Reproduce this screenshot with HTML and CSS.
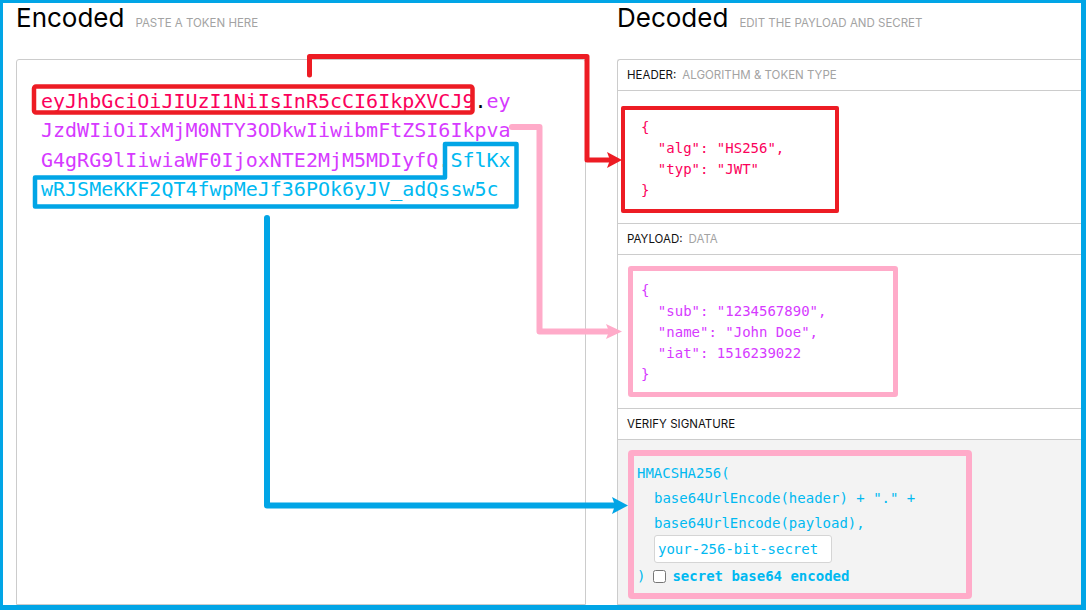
FILE: index.html
```html
<!DOCTYPE html>
<html lang="en">
<head>
<meta charset="utf-8">
<title>JWT Debugger</title>
<link rel="stylesheet" href="styles.css">
</head>
<body>
<div class="frame">
  <section class="col">
    <header class="title-row">
      <h2 class="title">Encoded</h2>
      <span class="subtitle">PASTE A TOKEN HERE</span>
    </header>
    <div class="box encoded">
      <div class="token"><span class="tk-header">eyJhbGciOiJIUzI1NiIsInR5cCI6IkpXVCJ9</span><span class="tk-dot">.</span><span class="tk-payload">eyJzdWIiOiIxMjM0NTY3ODkwIiwibmFtZSI6IkpvaG4gRG9lIiwiaWF0IjoxNTE2MjM5MDIyfQ</span><span class="tk-dot">.</span><span class="tk-sig">SflKxwRJSMeKKF2QT4fwpMeJf36POk6yJV_adQssw5c</span></div>
    </div>
  </section>

  <section class="col">
    <header class="title-row">
      <h2 class="title">Decoded</h2>
      <span class="subtitle">EDIT THE PAYLOAD AND SECRET</span>
    </header>
    <div class="box panel">
      <div class="panel-head"><span class="ph-name">HEADER:</span><span class="ph-desc">ALGORITHM &amp; TOKEN TYPE</span></div>
      <div class="panel-body pb-header">
<pre class="json json-header">{
  "alg": "HS256",
  "typ": "JWT"
}</pre>
      </div>
      <div class="panel-head"><span class="ph-name">PAYLOAD:</span><span class="ph-desc">DATA</span></div>
      <div class="panel-body pb-payload">
<pre class="json json-payload">{
  "sub": "1234567890",
  "name": "John Doe",
  "iat": 1516239022
}</pre>
      </div>
      <div class="panel-head"><span class="ph-name">VERIFY SIGNATURE</span></div>
      <div class="panel-body pb-verify">
        <div class="verify">
          <div class="v-line">HMACSHA256(</div>
          <div class="v-indent">
            <div class="v-line">base64UrlEncode(header) + "." +</div>
            <div class="v-line">base64UrlEncode(payload),</div>
            <input class="secret" type="text" value="your-256-bit-secret">
          </div>
          <div class="v-line v-last"><span>)</span><input class="cb" type="checkbox"><span class="cb-label">secret base64 encoded</span></div>
        </div>
      </div>
    </div>
  </section>
</div>

<svg class="annotations" width="1086" height="610" viewBox="0 0 1086 610" aria-hidden="true">
  <!-- highlight boxes on the encoded token -->
  <rect x="34" y="86.5" width="438.5" height="26" rx="2" fill="none" stroke="#ed1c24" stroke-width="4.5"/>
  <path d="M445 144 H516.5 V206.5 H35 V177.5 H445 Z" fill="none" stroke="#01a5e6" stroke-width="4.5" stroke-linejoin="round"/>
  <!-- red arrow: header -->
  <path d="M309.5 75 V56.5 H587 V160 H611" fill="none" stroke="#ed1c24" stroke-width="5" stroke-linejoin="round" stroke-linecap="round"/>
  <polygon points="607,152 622,160 607,168 610,160" fill="#ed1c24"/>
  <!-- pink arrow: payload -->
  <path d="M512 127 H539.5 V331.5 H610" fill="none" stroke="#ffabc9" stroke-width="6" stroke-linejoin="round" stroke-linecap="round"/>
  <polygon points="606,324 622,331.5 606,339 609,331.5" fill="#ffabc9"/>
  <!-- blue arrow: signature -->
  <path d="M267 218 V505.5 H615" fill="none" stroke="#01a5e6" stroke-width="6" stroke-linejoin="round" stroke-linecap="round"/>
  <polygon points="612,497 628,505.5 612,514 615,505.5" fill="#01a5e6"/>
</svg>
</body>
</html>
```

FILE: styles.css
```css
* {
  box-sizing: border-box;
  margin: 0;
  padding: 0;
}

html, body {
  width: 1086px;
  height: 610px;
  overflow: hidden;
  background: #fff;
}

body {
  position: relative;
  font-family: Inter, "Open Sans", "Liberation Sans", sans-serif;
  color: #000;
}

.frame {
  width: 1086px;
  height: 610px;
  border-style: solid;
  border-color: #01a5e6;
  border-width: 3px 5px 5px 3px;
  padding-left: 13px;
  display: grid;
  grid-template-columns: 570px 1fr;
  column-gap: 31px;
  overflow: hidden;
}

.col {
  display: flex;
  flex-direction: column;
  min-height: 0;
}

.title-row {
  height: 56px;
  flex: none;
  display: flex;
  align-items: baseline;
  gap: 11px;
}

.title {
  font-size: 26px;
  line-height: 30px;
  font-weight: 400;
  color: #000;
}

.subtitle {
  font-size: 11.5px;
  color: #a3a3a3;
}

.box {
  flex: 1;
  border: 1px solid #ccc;
  border-radius: 3px 3px 0 0;
}

/* ---------- Encoded ---------- */
.encoded {
  padding: 26.5px 0 0 24px;
}

.token {
  width: calc(39ch + 2px);
  font-family: "DejaVu Sans Mono", "Liberation Mono", monospace;
  font-size: 20px;
  line-height: 29.5px;
  word-break: break-all;
}

.tk-header { color: #fb015b; }
.tk-dot { color: #000; }
.tk-payload { color: #d63aff; }
.tk-sig { color: #00b9f1; }

/* ---------- Decoded ---------- */
.panel {
  border-right: none;
  border-radius: 3px 0 0 0;
  display: flex;
  flex-direction: column;
}

.panel-head {
  flex: none;
  height: 31px;
  border-bottom: 1px solid #ccc;
  display: flex;
  align-items: center;
  gap: 6px;
  padding-left: 9px;
  font-size: 11.5px;
}

.ph-name { color: #111; }
.ph-desc { color: #a3a3a3; }

.panel-body {
  flex: none;
  border-bottom: 1px solid #ccc;
}

.json {
  font-family: "DejaVu Sans Mono", "Liberation Mono", monospace;
  font-size: 14px;
  line-height: 21px;
  white-space: pre;
}

.pb-header {
  height: 133px;
  padding: 15px 0 0 3px;
}

.json-header {
  width: 218px;
  border: 4px solid #ed1c24;
  border-radius: 2px;
  padding: 6.5px 0 8.5px 16px;
  color: #fb015b;
}

.pb-payload {
  height: 154px;
  padding: 11px 0 0 10px;
}

.json-payload {
  width: 270px;
  border: 5px solid #ffabc9;
  border-radius: 3px;
  padding: 9px 0 7px 8px;
  color: #d63aff;
}

.pb-verify {
  flex: 1;
  border-bottom: none;
  background: #f3f3f3;
  padding: 10px 0 0 10px;
}

.verify {
  width: 344px;
  border: 6px solid #ffabc9;
  border-radius: 4px;
  padding: 5px 0 4px 3px;
  font-family: "DejaVu Sans Mono", "Liberation Mono", monospace;
  font-size: 14px;
  line-height: 25px;
  color: #00b9f1;
}

.v-indent {
  padding-left: 17px;
}

.secret {
  display: block;
  width: 178px;
  height: 28px;
  margin: -1px 0 1px 0;
  padding: 0 3px;
  border: 1px solid #d5d5d5;
  border-radius: 3px;
  background: #fff;
  font-family: "DejaVu Sans Mono", "Liberation Mono", monospace;
  font-size: 14px;
  color: #00b9f1;
  outline: none;
}

.v-last {
  display: flex;
  align-items: center;
}

.cb {
  width: 13px;
  height: 13px;
  margin: 0 6px 0 8px;
}

.cb-label {
  font-weight: 700;
}

/* ---------- Annotation overlay ---------- */
.annotations {
  position: absolute;
  top: 0;
  left: 0;
  pointer-events: none;
}
```
